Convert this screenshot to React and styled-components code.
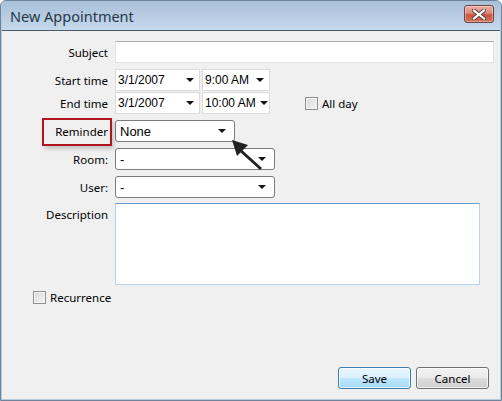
import styled, { createGlobalStyle, css } from 'styled-components';

const GlobalStyle = createGlobalStyle`
	html, body {
		margin: 0;
		padding: 0;
		background: #ffffff;
	}
	* {
		box-sizing: border-box;
	}
`;

const Window = styled.div`
	display: flex;
	flex-direction: column;
	width: 502px;
	height: 401px;
	border: 1px solid #6f8399;
	border-radius: 6px 6px 0 0;
	background: #b4cbe1;
	padding: 0 1px 1px 1px;
	font-family: 'Noto Sans', 'Open Sans', sans-serif;
	overflow: hidden;
`;

const TitleBar = styled.div`
	display: flex;
	align-items: center;
	justify-content: space-between;
	height: 29px;
	padding: 0 6px 0 8px;
	background: linear-gradient(to bottom, #a9c0da 0%, #b7cce2 50%, #c6daee 100%);
`;

const Title = styled.span`
	font-size: 14.5px;
	color: #26374a;
`;

const CloseButton = styled.div`
	display: flex;
	align-items: center;
	justify-content: center;
	width: 30px;
	height: 18px;
	margin-top: -3px;
	border: 1px solid #6e4440;
	border-radius: 3px;
	background: linear-gradient(to bottom, #eab0a5 0%, #dc8a78 45%, #c9553f 55%, #d0735c 100%);
	box-shadow: inset 0 0 0 1px rgba(255, 255, 255, 0.35);
`;

const Body = styled.div`
	position: relative;
	display: flex;
	flex-direction: column;
	flex: 1;
	border-top: 1px solid #4f5a66;
	background: #f0f0f0;
	padding-top: 10px;
	font-size: 12px;
	color: #000;
`;

const Row = styled.div`
	display: flex;
	align-items: ${(p) => (p.$top ? 'flex-start' : 'center')};
	margin-top: ${(p) => p.$gap || 0}px;
`;

const Label = styled.span`
	position: relative;
	width: 106px;
	margin-right: 7px;
	text-align: right;
	font-size: 11.5px;
	padding-top: ${(p) => (p.$top ? 4 : 0)}px;
	color: #000;
	${(p) =>
		p.$highlight &&
		css`
			&::after {
				content: '';
				position: absolute;
				left: 40px;
				right: -4px;
				top: -6px;
				bottom: -7px;
				border: 2px solid #b4151b;
				box-shadow: 2px 3px 4px rgba(0, 0, 0, 0.18);
			}
		`}
`;

const TextBox = styled.div`
	height: 22px;
	width: ${(p) => p.$width}px;
	background: #fff;
	border: 1px solid #e2e6ea;
	border-top-color: #abadb3;
`;

const DateBox = styled.div`
	display: flex;
	align-items: center;
	justify-content: space-between;
	height: 22px;
	width: ${(p) => p.$width}px;
	margin-right: ${(p) => p.$mr || 0}px;
	padding: 0 5px 0 2px;
	background: #fff;
	border: 1px solid #dcdcdc;
	font-family: 'Liberation Sans', Arial, sans-serif;
	font-size: 12px;
	white-space: nowrap;
	color: #000;
`;

const Select = styled.div`
	display: flex;
	align-items: center;
	justify-content: space-between;
	height: 22px;
	width: ${(p) => p.$width}px;
	padding: 0 8px 0 4px;
	background: #fff;
	border: 1px solid #7b7b7b;
	border-radius: 3px;
	font-family: 'Liberation Sans', Arial, sans-serif;
	font-size: 13px;
	color: #000;
`;

const Caret = styled.span`
	flex-shrink: 0;
	margin-left: 4px;
	width: 0;
	height: 0;
	border-left: 4px solid transparent;
	border-right: 4px solid transparent;
	border-top: 4px solid #111;
`;

const TextArea = styled.div`
	width: 365px;
	height: 82px;
	background: #fff;
	border: 1px solid #b5d4f0;
	border-top-color: #6b9ccb;
`;

const CheckRow = styled.label`
	display: flex;
	align-items: center;
	gap: 4px;
	margin-left: ${(p) => p.$ml || 0}px;
	margin-top: ${(p) => p.$mt || 0}px;
	font-size: 11.5px;
	color: #000;
`;

const CheckBox = styled.span`
	width: 13px;
	height: 13px;
	border: 1px solid #8e8f8f;
	background: linear-gradient(135deg, #d8d8d8 0%, #f4f4f4 100%);
	box-shadow: inset 0 0 0 1px #f4f4f4;
`;

const Footer = styled.div`
	display: flex;
	justify-content: flex-end;
	gap: 5px;
	margin-top: auto;
	padding: 0 11px 10px 0;
`;

const Button = styled.button`
	width: 73px;
	height: 22px;
	padding: 0;
	border-radius: 3px;
	font-family: 'Noto Sans', 'Open Sans', sans-serif;
	font-size: 11.5px;
	color: #000;
	border: 1px solid ${(p) => (p.$primary ? '#3c7fb1' : '#707070')};
	background: ${(p) =>
		p.$primary
			? 'linear-gradient(to bottom, #eaf6fd 0%, #d9f0fc 50%, #bee6fd 51%, #a7d9f5 100%)'
			: 'linear-gradient(to bottom, #f2f2f2 0%, #ebebeb 50%, #dddddd 51%, #cfcfcf 100%)'};
	box-shadow: inset 0 0 0 1px rgba(255, 255, 255, 0.7);
`;

const Pointer = styled.svg`
	position: absolute;
	left: 226px;
	top: 104px;
`;

export default function App() {
	return (
		<>
			<GlobalStyle />
			<Window>
				<TitleBar>
					<Title>New Appointment</Title>
					<CloseButton>
						<svg width="14" height="11" viewBox="0 0 14 11">
							<path d="M2 1.5 L12 9.5 M12 1.5 L2 9.5" stroke="#5a3a36" strokeWidth="4" strokeLinecap="square" />
							<path d="M2 1.5 L12 9.5 M12 1.5 L2 9.5" stroke="#ffffff" strokeWidth="2.2" strokeLinecap="square" />
						</svg>
					</CloseButton>
				</TitleBar>
				<Body>
					<Row>
						<Label>Subject</Label>
						<TextBox $width={379} />
					</Row>
					<Row $gap={6}>
						<Label>Start time</Label>
						<DateBox $width={85} $mr={2}>
							3/1/2007
							<Caret />
						</DateBox>
						<DateBox $width={68}>
							9:00 AM
							<Caret />
						</DateBox>
					</Row>
					<Row $gap={1}>
						<Label>End time</Label>
						<DateBox $width={85} $mr={2}>
							3/1/2007
							<Caret />
						</DateBox>
						<DateBox $width={68}>
							10:00 AM
							<Caret />
						</DateBox>
						<CheckRow $ml={35}>
							<CheckBox />
							All day
						</CheckRow>
					</Row>
					<Row $gap={6}>
						<Label $highlight>Reminder</Label>
						<Select $width={120}>
							None
							<Caret />
						</Select>
					</Row>
					<Row $gap={6}>
						<Label>Room:</Label>
						<Select $width={160}>
							-
							<Caret />
						</Select>
					</Row>
					<Row $gap={6}>
						<Label>User:</Label>
						<Select $width={160}>
							-
							<Caret />
						</Select>
					</Row>
					<Row $gap={5} $top>
						<Label $top>Description</Label>
						<TextArea />
					</Row>
					<CheckRow $ml={31} $mt={5}>
						<CheckBox />
						Recurrence
					</CheckRow>
					<Footer>
						<Button $primary>Save</Button>
						<Button>Cancel</Button>
					</Footer>
					<Pointer width="40" height="36" viewBox="0 0 40 36">
						<line x1="33" y1="34" x2="12" y2="15" stroke="#222" strokeWidth="3" />
						<polygon points="4,5 20,10 9,21" fill="#222" />
					</Pointer>
				</Body>
			</Window>
		</>
	);
}
